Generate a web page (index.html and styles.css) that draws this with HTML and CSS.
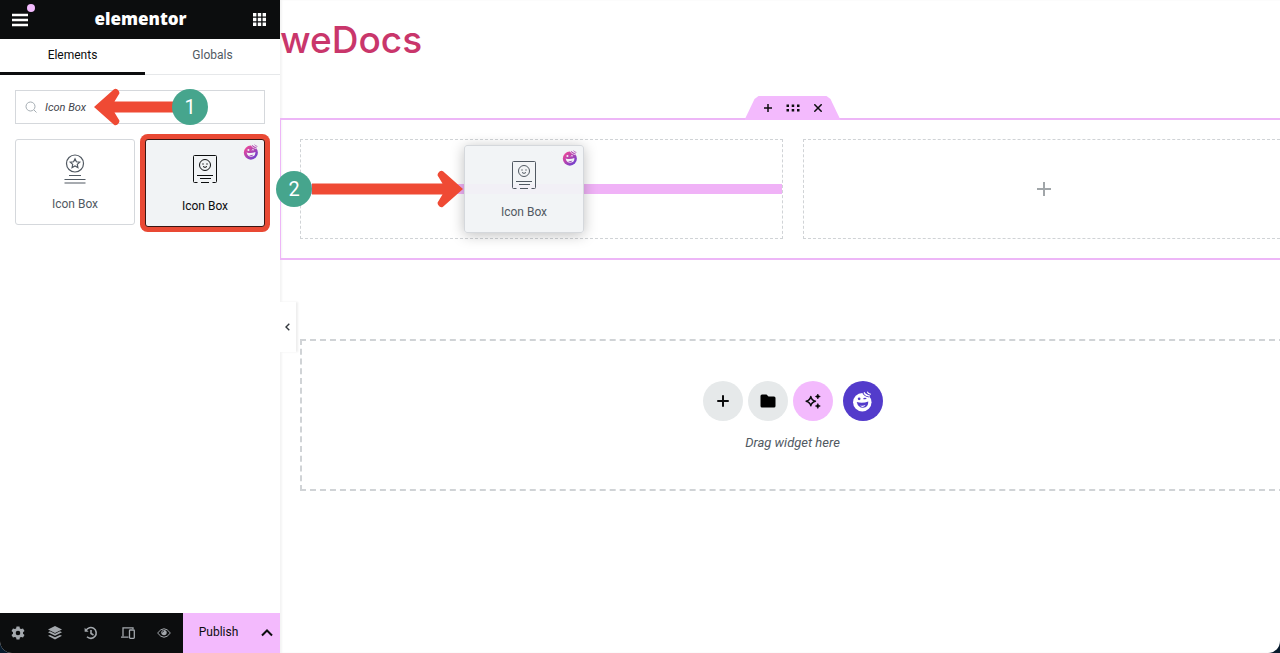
FILE: index.html
```html
<!DOCTYPE html>
<html lang="en">
<head>
    <meta charset="UTF-8">
    <meta name="viewport" content="width=device-width, initial-scale=1.0">
    <title>Elementor</title>
    <link rel="stylesheet" href="styles.css">
</head>
<body>
    <!-- Shared icons -->
    <svg class="defs" aria-hidden="true">
        <defs>
            <linearGradient id="face-gradient" x1="0" y1="0" x2="1" y2="1">
                <stop offset="0.2" stop-color="#e0479e"/>
                <stop offset="0.9" stop-color="#6a3fd0"/>
            </linearGradient>
            <symbol id="card-icon" viewBox="0 0 26 30">
                <g fill="none" stroke="currentColor">
                    <path d="M5.500 28.500h-3a1 1 0 0 1-1-1v-25a1 1 0 0 1 1-1h21a1 1 0 0 1 1 1v25a1 1 0 0 1-1 1h-3M9 28.500h8"/>
                    <circle cx="13" cy="11" r="5.500"/>
                    <path d="M11 12.500q2 1.800 4 0M5 21.500h16M8 24.500h11"/>
                </g>
                <circle cx="11" cy="10" r=".7" fill="currentColor"/>
                <circle cx="15" cy="10" r=".7" fill="currentColor"/>
            </symbol>
            <symbol id="happy-face" viewBox="0 0 20 20">
                <mask id="face-mask">
                    <rect width="20" height="20" fill="#fff"/>
                    <path d="M4.500 10.500q5.500 1.500 11-.5.200 5.500-5 6-4.700 0-6-5.500z" fill="#000"/>
                    <path d="M7.500 13.800q3 .8 5.500-.6-1 2-2.800 2-1.700 0-2.700-1.400z" fill="#fff"/>
                    <circle cx="6.800" cy="7.500" r="1.300" fill="#000"/>
                    <path d="M11 7.800q1.300-1.500 2.600-.3" stroke="#000" stroke-width="1.200" fill="none"/>
                    <path d="M10 .5q.8 4.500 6.500 5.300" stroke="#000" stroke-width="1" fill="none"/>
                </mask>
                <circle cx="9.800" cy="10.800" r="8.800" mask="url(#face-mask)"/>
                <path d="M11.500 1.200q1 3 5.500 3.500M14.500.700q.8 2 3.500 2.300" fill="none" stroke="currentColor"/>
            </symbol>
        </defs>
    </svg>

    <div class="editor">
        <!-- Side panel -->
        <aside class="panel">
            <header class="panel-header">
                <button class="icon-btn menu-btn" aria-label="Menu">
                    <svg width="16" height="14" viewBox="0 0 16 14"><path d="M0 2h16M0 7h16M0 12h16" stroke="#fff" stroke-width="2.400"/></svg>
                    <span class="menu-dot"></span>
                </button>
                <span class="logo">elementor</span>
                <button class="icon-btn" aria-label="Widgets">
                    <svg width="13" height="13" viewBox="0 0 13 13" fill="#fff"><path d="M0 0h3.400v3.400H0zM4.800 0h3.400v3.400H4.800zM9.600 0H13v3.400H9.600zM0 4.800h3.400v3.400H0zM4.800 4.800h3.400v3.400H4.800zM9.600 4.800H13v3.400H9.600zM0 9.600h3.400V13H0zM4.800 9.600h3.400V13H4.800zM9.600 9.600H13V13H9.600z"/></svg>
                </button>
            </header>

            <nav class="tabs">
                <button class="tab active">Elements</button>
                <button class="tab">Globals</button>
            </nav>

            <div class="search">
                <svg width="12" height="12" viewBox="0 0 12 12" fill="none" stroke="#a5adb3" stroke-width="1"><circle cx="5.500" cy="5.500" r="4.500"/><path d="M9 9l2.500 2.500"/></svg>
                <input type="text" value="Icon Box" aria-label="Search widget">
                <div class="step step-one">
                    <svg width="82" height="38" viewBox="0 0 82 38"><path d="M0 19L20 1.200q2.500-1.600 4.800 1.800 1.300 2.200-.2 3.700L20.500 13.500H82v11H20.500l4.100 6.800q1.500 1.500.2 3.700-2.300 3.400-4.800 1.800z" fill="#ef4a34"/></svg>
                    <span class="step-number">1</span>
                </div>
            </div>

            <div class="widgets">
                <button class="widget">
                    <svg width="22" height="30" viewBox="0 0 22 30" fill="none" stroke="#515962" stroke-width="1.200">
                        <circle cx="11" cy="9.500" r="8.500"/>
                        <path d="M11 4.800l1.400 3 3.300.4-2.400 2.200.6 3.200-2.900-1.600-2.900 1.600.6-3.200-2.400-2.200 3.300-.4zM5 21.500h12M.5 25.500h21M.5 29h21"/>
                    </svg>
                    <span>Icon Box</span>
                </button>
                <button class="widget selected">
                    <svg width="26" height="30"><use href="#card-icon"/></svg>
                    <span>Icon Box</span>
                    <svg class="widget-badge" width="16" height="16"><use href="#happy-face"/></svg>
                </button>
            </div>

            <footer class="panel-footer">
                <div class="tools">
                    <button class="icon-btn" aria-label="Settings">
                        <svg width="14" height="14" viewBox="0 0 14 14"><path fill="#a4a8ad" fill-rule="evenodd" d="M5.500.5h3l.4 1.900 1.200.7 1.900-.7 1.500 2.600-1.500 1.300v1.400l1.500 1.300-1.500 2.600-1.900-.7-1.200.7-.4 1.900h-3l-.4-1.900-1.200-.7-1.900.7L.5 9 2 7.700V6.300L.5 5 2 2.400l1.900.7 1.200-.7zM7 4.700a2.300 2.300 0 1 0 0 4.600 2.300 2.300 0 0 0 0-4.600z"/></svg>
                    </button>
                    <button class="icon-btn" aria-label="Structure">
                        <svg width="14" height="14" viewBox="0 0 14 14" fill="#a4a8ad"><path d="M7 0l7 3.500L7 7 0 3.500z"/><path d="M0 6.200l2-.9 5 2.500 5-2.500 2 .9L7 9.800zM0 9.800l2-.9 5 2.400 5-2.400 2 .9L7 13.500z"/></svg>
                    </button>
                    <button class="icon-btn" aria-label="History">
                        <svg width="14" height="14" viewBox="0 0 14 14" fill="none" stroke="#a4a8ad" stroke-width="1.600"><path d="M2 4.500a5.400 5.400 0 1 1 1 6.300M7 4v3.500L9.500 9"/><path d="M.6 1.800v4h4z" fill="#a4a8ad" stroke="none"/></svg>
                    </button>
                    <button class="icon-btn" aria-label="Responsive mode">
                        <svg width="14" height="12" viewBox="0 0 14 12" fill="none" stroke="#a4a8ad" stroke-width="1.300"><path d="M12 2V.8H2v8.500M0 10.200h7.500"/><rect x="8.500" y="3" width="4.800" height="8.300" rx=".8"/></svg>
                    </button>
                    <button class="icon-btn" aria-label="Preview changes">
                        <svg width="14" height="10" viewBox="0 0 14 10" fill="none" stroke="#a4a8ad"><path d="M.6 5q6.400-8.500 12.800 0-6.400 8.500-12.800 0z"/><circle cx="7" cy="4.600" r="2.700" fill="#a4a8ad" stroke="none"/><path d="M5.500 4.500q0-1.500 1.500-1.500" stroke="#0c0d0e" stroke-width=".8"/></svg>
                    </button>
                </div>
                <button class="publish">Publish</button>
                <button class="publish-options" aria-label="Save options">
                    <svg width="12" height="8" viewBox="0 0 12 8" fill="none" stroke="#0c0d0e" stroke-width="2"><path d="M1 6.500l5-5 5 5"/></svg>
                </button>
            </footer>
        </aside>

        <!-- Page preview -->
        <main class="preview">
            <button class="collapse" aria-label="Hide panel">
                <svg width="5" height="8" viewBox="0 0 5 8" fill="none" stroke="#33383d" stroke-width="1.400"><path d="M4.300.8L1 4l3.300 3.200"/></svg>
            </button>
            <div class="canvas">
                <h1>weDocs</h1>

                <section class="section">
                    <div class="section-handle">
                        <button class="icon-btn" aria-label="Add container">
                            <svg width="8" height="8" viewBox="0 0 8 8" stroke="#0c0d0e" stroke-width="1.500"><path d="M4 0v8M0 4h8"/></svg>
                        </button>
                        <button class="icon-btn" aria-label="Edit container">
                            <svg width="14" height="8" viewBox="0 0 14 8" fill="#0c0d0e"><path d="M.5.500h2.500V3H.5zM5.700.500h2.500V3H5.700zM11 .5h2.500V3H11zM.5 5h2.500v2.500H.5zM5.700 5h2.500v2.500H5.700zM11 5h2.500v2.500H11z"/></svg>
                        </button>
                        <button class="icon-btn" aria-label="Delete container">
                            <svg width="8" height="8" viewBox="0 0 8 8" stroke="#0c0d0e" stroke-width="1.500"><path d="M.3.300l7.400 7.400M7.700.300L.3 7.700"/></svg>
                        </button>
                    </div>
                    <div class="column">
                        <div class="drop-line"></div>
                        <div class="widget dragged">
                            <svg width="26" height="30"><use href="#card-icon"/></svg>
                            <span>Icon Box</span>
                            <svg class="widget-badge" width="16" height="16"><use href="#happy-face"/></svg>
                        </div>
                        <div class="step step-two">
                            <span class="step-number">2</span>
                            <svg width="151" height="38" viewBox="0 0 151 38"><path d="M151 19L131 1.200q-2.500-1.600-4.800 1.800-1.300 2.200.2 3.700l4.100 6.800H0v11h130.500l-4.100 6.800q-1.500 1.500-.2 3.700 2.300 3.400 4.800 1.800z" fill="#ef4a34"/></svg>
                        </div>
                    </div>
                    <div class="column">
                        <svg width="14" height="14" viewBox="0 0 14 14" stroke="#a1a6a9" stroke-width="2"><path d="M7 0v14M0 7h14"/></svg>
                    </div>
                </section>

                <section class="add-section">
                    <div class="add-buttons">
                        <button class="round" aria-label="Add new container">
                            <svg width="12" height="12" viewBox="0 0 12 12" stroke="#0c0d0e" stroke-width="2" stroke-linecap="round"><path d="M6 1v10M1 6h10"/></svg>
                        </button>
                        <button class="round" aria-label="Add template">
                            <svg width="16" height="14" viewBox="0 0 16 14"><path d="M2 .5h4.500l2 2H14a1.500 1.500 0 0 1 1.500 1.500v8a1.500 1.500 0 0 1-1.500 1.500H2A1.500 1.500 0 0 1 .5 12V2A1.500 1.500 0 0 1 2 .5z" fill="#000"/></svg>
                        </button>
                        <button class="round pink" aria-label="Build with AI">
                            <svg width="16" height="16" viewBox="0 0 16 16"><path d="M5.800 3.500q.8 3.900 4.700 4.700-3.900.8-4.700 4.700-.8-3.900-4.700-4.700 3.900-.8 4.700-4.700z" fill="none" stroke="#0c0d0e" stroke-width="1.400" stroke-linejoin="round"/><path d="M12.800 1l.8 1.700 1.700.8-1.700.8-.8 1.700-.8-1.700-1.700-.8 1.700-.8zM12.800 10.500l.8 1.700 1.700.8-1.700.8-.8 1.700-.8-1.700-1.700-.8 1.700-.8z" stroke="#0c0d0e" stroke-width=".6"/></svg>
                        </button>
                        <button class="round violet" aria-label="HappyAddons library">
                            <svg width="21" height="21"><use href="#happy-face"/></svg>
                        </button>
                    </div>
                    <p>Drag widget here</p>
                </section>
            </div>
        </main>
    </div>
</body>
</html>
```
FILE: styles.css
```css
* {
    box-sizing: border-box;
}

html {
    background: #071a2c;
}

body {
    margin: 0;
    font-family: Roboto, "Liberation Sans", sans-serif;
    font-size: 12px;
    color: #515962;
}

button {
    font: inherit;
    color: inherit;
    background: none;
    border: none;
    padding: 0;
    cursor: pointer;
}

svg {
    display: block;
    flex-shrink: 0;
}

.defs {
    position: absolute;
    width: 0;
    height: 0;
}

.editor {
    display: flex;
    height: 100vh;
    background: #fff;
    border-radius: 0 0 12px 12px;
    overflow: hidden;
}

.icon-btn {
    display: flex;
    align-items: center;
    justify-content: center;
}

/* Panel */
.panel {
    width: 280px;
    flex-shrink: 0;
    display: flex;
    flex-direction: column;
    position: relative;
    z-index: 1;
}

.panel-header {
    display: flex;
    align-items: center;
    justify-content: space-between;
    height: 39px;
    padding: 0 14px 0 12px;
    background: #0c0d0e;
}

.menu-btn {
    position: relative;
}

.menu-dot {
    position: absolute;
    top: -9px;
    right: -7px;
    width: 8px;
    height: 8px;
    border-radius: 50%;
    background: #f3bafd;
}

.logo {
    font-family: "Open Sans", sans-serif;
    font-size: 17px;
    font-weight: 800;
    line-height: 20px;
    padding-bottom: 2px;
    color: #fff;
}

.tabs {
    display: flex;
    height: 36px;
    border-bottom: 1px solid #e6e8ea;
}

.tab {
    flex: 1;
    padding-bottom: 3px;
}

.tab.active {
    flex: 0 0 145px;
    margin-bottom: -1px;
    padding-bottom: 1px;
    color: #0c0d0e;
    border-bottom: 3px solid #0c0d0e;
}

.search {
    display: flex;
    align-items: center;
    gap: 8px;
    position: relative;
    height: 34px;
    margin: 15px;
    padding: 0 9px;
    border: 1px solid #d5d8dc;
}

.search input {
    flex: 1;
    min-width: 0;
    padding: 0;
    border: none;
    outline: none;
    background: none;
    font: italic 11px Roboto, sans-serif;
    color: #3f444b;
}

.widgets {
    display: grid;
    grid-template-columns: 1fr 1fr;
    align-items: start;
    gap: 10px;
    padding: 0 15px;
}

.widget {
    display: flex;
    flex-direction: column;
    align-items: center;
    gap: 12px;
    position: relative;
    height: 86px;
    padding-top: 14px;
    border: 1px solid #d5d8dc;
    border-radius: 3px;
    line-height: 16px;
}

.widget.selected {
    height: 88px;
    color: #0c0d0e;
    background: #f1f3f5;
    border-color: #3a1512;
    box-shadow: 0 0 0 5px #e94934;
}

.widget.selected,
.widget.dragged {
    gap: 14px;
}

.widget-badge {
    position: absolute;
    top: 4px;
    right: 5px;
    color: #b04ab5;
    fill: url(#face-gradient);
}

.panel-footer {
    display: flex;
    height: 40px;
    margin-top: auto;
    background: #0c0d0e;
}

.tools {
    flex: 1;
    display: flex;
    align-items: center;
    justify-content: space-between;
    padding: 0 12px 0 11px;
}

.publish {
    width: 71px;
    padding-bottom: 2px;
    color: #0c0d0e;
    background: #f3bafd;
}

.publish-options {
    display: flex;
    align-items: center;
    justify-content: center;
    width: 26px;
    background: #f3bafd;
}

/* Numbered steps */
.step {
    position: absolute;
    z-index: 2;
    display: flex;
    align-items: center;
}

.step-number {
    width: 36px;
    height: 36px;
    border-radius: 50%;
    background: #46a58d;
    color: #fff;
    font-size: 20px;
    line-height: 36px;
    text-align: center;
}

.step-one {
    top: -3px;
    left: 78px;
}

.step-one .step-number {
    margin-left: -4px;
}

.step-two {
    top: 30px;
    left: -25px;
}

.step-two .step-number {
    flex-shrink: 0;
}

/* Preview */
.preview {
    flex: 1;
    min-width: 0;
    position: relative;
    z-index: 2;
    box-shadow: inset 2px 0 2px #f4f4f4;
}

.collapse {
    position: absolute;
    top: 302px;
    left: 0;
    display: flex;
    align-items: center;
    width: 16px;
    height: 50px;
    padding-left: 5px;
    background: #fff;
    box-shadow: 2px 0 2px #eee;
}

/* the page is slightly wider than the visible frame */
.canvas {
    margin-right: -25px;
}

h1 {
    margin: 0;
    padding: 16px 0 54px;
    font-family: Inter, sans-serif;
    font-size: 37px;
    font-weight: 500;
    line-height: 48px;
    color: #c9366b;
}

.section {
    display: grid;
    grid-template-columns: 1fr 1fr;
    gap: 20px;
    position: relative;
    padding: 19px;
    border: solid #edb6f7;
    border-width: 2px 1px;
}

.section-handle {
    position: absolute;
    top: -24px;
    left: 50%;
    display: flex;
    justify-content: center;
    gap: 14px;
    width: 96px;
    height: 24px;
    margin-left: -48px;
    background: #f3bafd;
    clip-path: polygon(0 100%, 10px 3px, 14px 0, 82px 0, 86px 3px, 100% 100%);
}

.column {
    display: flex;
    align-items: center;
    justify-content: center;
    position: relative;
    height: 100px;
    border: 1px dashed #d0d3d6;
}

.drop-line {
    flex: 1;
    height: 10px;
    background: #f0b2f7;
}

.widget.dragged {
    position: absolute;
    top: 5px;
    left: 163px;
    width: 120px;
    height: 88px;
    background: rgba(241, 243, 245, 0.95);
    box-shadow: 0 2px 14px rgba(0, 0, 0, 0.25);
}

.add-section {
    display: flex;
    flex-direction: column;
    align-items: center;
    gap: 12px;
    height: 152px;
    margin: 79px 20px 0;
    padding-top: 40px;
    border: 2px dashed #d0d3d6;
}

.add-buttons {
    display: flex;
    gap: 5px;
}

.round {
    display: flex;
    align-items: center;
    justify-content: center;
    width: 40px;
    height: 40px;
    border-radius: 50%;
    background: #e6e9ea;
}

.round.pink {
    background: #f3bafd;
}

.round.violet {
    margin-left: 5px;
    color: #fff;
    fill: #fff;
    background: #533bcb;
}

.add-section p {
    margin: 0;
    font-size: 13px;
    font-style: italic;
    line-height: 20px;
}
```
